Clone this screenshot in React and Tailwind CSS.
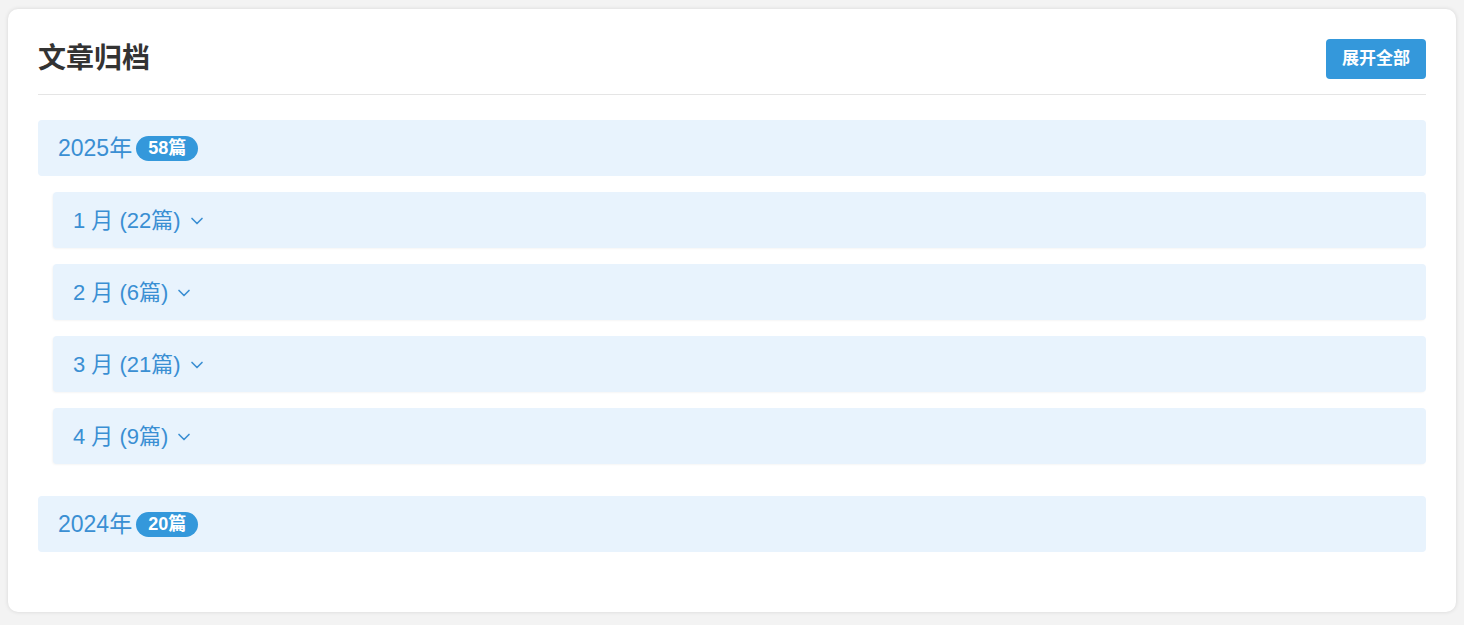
import { ChevronDown } from 'lucide-react'

const archive = [
  {
    year: 2025,
    count: 58,
    months: [
      { month: 1, count: 22 },
      { month: 2, count: 6 },
      { month: 3, count: 21 },
      { month: 4, count: 9 },
    ],
  },
  { year: 2024, count: 20, months: [] },
]

const font = { fontFamily: '"Liberation Sans", "Noto Sans CJK SC", sans-serif' }

const App = () => {
  return (
    <div className="min-h-screen bg-[#f3f3f3] px-2 pt-[9px] pb-[13px]" style={font}>
      <div className="bg-white rounded-[10px] shadow-[0_0_4px_rgba(0,0,0,0.12)] p-[30px]">
        {/* Header */}
        <div className="flex items-center justify-between pb-[15px] border-b border-[#e5e5e5]">
          <h2 className="text-[28px] leading-10 font-bold text-[#333]">文章归档</h2>
          <button className="h-10 w-[100px] rounded bg-[#3498db] text-white text-[17px] font-bold">
            展开全部
          </button>
        </div>

        {/* Years */}
        <div className="mt-[25px] mb-[30px] flex flex-col gap-8">
          {archive.map((y) => (
            <div key={y.year} className="flex flex-col gap-4">
              <div className="h-14 flex items-center px-5 rounded bg-[#e8f3fd] text-[#3a8fd3]">
                <span className="text-[23px]">{y.year}年</span>
                <span className="ml-1 h-[25px] px-3 flex items-center rounded-full bg-[#3498db] text-white text-[18px] font-semibold">
                  {y.count}篇
                </span>
              </div>
              {y.months.map((m) => (
                <div
                  key={m.month}
                  className="ml-[15px] h-14 flex items-center px-5 rounded bg-[#e8f3fd] text-[#3a8fd3] shadow-[-1px_1px_2px_rgba(0,0,0,0.04)]"
                >
                  <span className="text-[22px]">
                    {m.month} 月 ({m.count}篇)
                  </span>
                  <ChevronDown size={20} strokeWidth={2} className="ml-1.5 mt-0.5" />
                </div>
              ))}
            </div>
          ))}
        </div>
      </div>
    </div>
  )
}

export default App
